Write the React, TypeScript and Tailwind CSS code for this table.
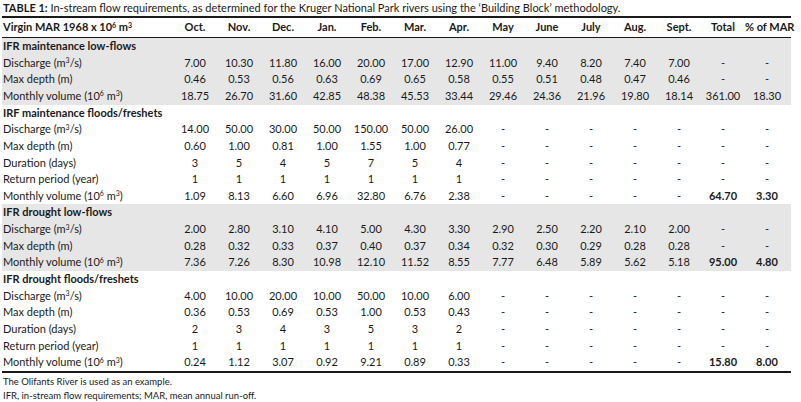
import React from 'react';

type Row = { label: React.ReactNode; values: string[]; boldTotals?: boolean };
type Section = { title: string; shaded: boolean; rows: Row[] };

const dash = (n: number) => Array(n).fill('-');

const Discharge = () => (
  <>
    Discharge (m<sup className="text-[7px]">3</sup>/s)
  </>
);
const Volume = () => (
  <>
    Monthly volume (10<sup className="text-[7px]">6</sup> m<sup className="text-[7px]">3</sup>)
  </>
);

const months = ['Oct.', 'Nov.', 'Dec.', 'Jan.', 'Feb.', 'Mar.', 'Apr.', 'May', 'June', 'July', 'Aug.', 'Sept.'];

const sections: Section[] = [
  {
    title: 'IFR maintenance low-flows',
    shaded: true,
    rows: [
      { label: <Discharge />, values: ['7.00', '10.30', '11.80', '16.00', '20.00', '17.00', '12.90', '11.00', '9.40', '8.20', '7.40', '7.00', '-', '-'] },
      { label: 'Max depth (m)', values: ['0.46', '0.53', '0.56', '0.63', '0.69', '0.65', '0.58', '0.55', '0.51', '0.48', '0.47', '0.46', '-', '-'] },
      { label: <Volume />, values: ['18.75', '26.70', '31.60', '42.85', '48.38', '45.53', '33.44', '29.46', '24.36', '21.96', '19.80', '18.14', '361.00', '18.30'] },
    ],
  },
  {
    title: 'IRF maintenance floods/freshets',
    shaded: false,
    rows: [
      { label: <Discharge />, values: ['14.00', '50.00', '30.00', '50.00', '150.00', '50.00', '26.00', ...dash(7)] },
      { label: 'Max depth (m)', values: ['0.60', '1.00', '0.81', '1.00', '1.55', '1.00', '0.77', ...dash(7)] },
      { label: 'Duration (days)', values: ['3', '5', '4', '5', '7', '5', '4', ...dash(7)] },
      { label: 'Return period (year)', values: ['1', '1', '1', '1', '1', '1', '1', ...dash(7)] },
      { label: <Volume />, values: ['1.09', '8.13', '6.60', '6.96', '32.80', '6.76', '2.38', ...dash(5), '64.70', '3.30'], boldTotals: true },
    ],
  },
  {
    title: 'IFR drought low-flows',
    shaded: true,
    rows: [
      { label: <Discharge />, values: ['2.00', '2.80', '3.10', '4.10', '5.00', '4.30', '3.30', '2.90', '2.50', '2.20', '2.10', '2.00', '-', '-'] },
      { label: 'Max depth (m)', values: ['0.28', '0.32', '0.33', '0.37', '0.40', '0.37', '0.34', '0.32', '0.30', '0.29', '0.28', '0.28', '-', '-'] },
      { label: <Volume />, values: ['7.36', '7.26', '8.30', '10.98', '12.10', '11.52', '8.55', '7.77', '6.48', '5.89', '5.62', '5.18', '95.00', '4.80'], boldTotals: true },
    ],
  },
  {
    title: 'IFR drought floods/freshets',
    shaded: false,
    rows: [
      { label: <Discharge />, values: ['4.00', '10.00', '20.00', '10.00', '50.00', '10.00', '6.00', ...dash(7)] },
      { label: 'Max depth (m)', values: ['0.36', '0.53', '0.69', '0.53', '1.00', '0.53', '0.43', ...dash(7)] },
      { label: 'Duration (days)', values: ['2', '3', '4', '3', '5', '3', '2', ...dash(7)] },
      { label: 'Return period (year)', values: ['1', '1', '1', '1', '1', '1', '1', ...dash(7)] },
      { label: <Volume />, values: ['0.24', '1.12', '3.07', '0.92', '9.21', '0.89', '0.33', ...dash(5), '15.80', '8.00'], boldTotals: true },
    ],
  },
];

const gridCols = 'grid grid-cols-[171px_repeat(14,44px)] items-center';

const App: React.FC = () => {
  return (
    <div className="w-[801px] h-[402px] bg-white text-[#1a1a1a] font-['Lato','Liberation_Sans',sans-serif] pl-[2px] overflow-hidden">
      {/* Caption */}
      <div className="h-[16px] pl-[1px] pt-[1px] text-[11px] leading-[14px] whitespace-nowrap">
        <span className="font-bold">TABLE 1:</span> In-stream flow requirements, as determined for the Kruger National Park rivers using the ‘Building Block’ methodology.
      </div>

      <div className="w-[789px]">
        <div className="h-[2px] bg-[#1a1a1a]" />

        {/* Header */}
        <div className={`${gridCols} h-[19px] text-[11px] font-bold`}>
          <div className="pl-[1px] whitespace-nowrap">
            Virgin MAR 1968 x 10<sup className="text-[7px]">6</sup> m<sup className="text-[7px]">3</sup>
          </div>
          {months.map((m) => (
            <div key={m} className="text-center">{m}</div>
          ))}
          <div className="text-center">Total</div>
          <div className="text-center whitespace-nowrap">% of MAR</div>
        </div>
        <div className="h-px bg-[#1a1a1a]" />

        {/* Body */}
        {sections.map((s) => (
          <div key={s.title} className={s.shaded ? 'bg-[#e6e6e6]' : 'bg-white'}>
            <div className="h-[16.65px] flex items-center pl-[1px] text-[11px] font-bold">{s.title}</div>
            {s.rows.map((r, i) => (
              <div key={i} className={`${gridCols} h-[16.65px] text-[11px]`}>
                <div className="pl-[1px] whitespace-nowrap">{r.label}</div>
                {r.values.map((v, j) => (
                  <div
                    key={j}
                    className={`text-center ${r.boldTotals && j >= 12 && v !== '-' ? 'font-bold' : ''}`}
                  >
                    {v}
                  </div>
                ))}
              </div>
            ))}
          </div>
        ))}
        <div className="h-[2px] bg-[#1a1a1a]" />

        {/* Notes */}
        <div className="pl-[1px] pt-[2px] text-[9.5px] leading-[14px]">
          <div>The Olifants River is used as an example.</div>
          <div>IFR, in-stream flow requirements; MAR, mean annual run-off.</div>
        </div>
      </div>
    </div>
  );
};

export default App;
